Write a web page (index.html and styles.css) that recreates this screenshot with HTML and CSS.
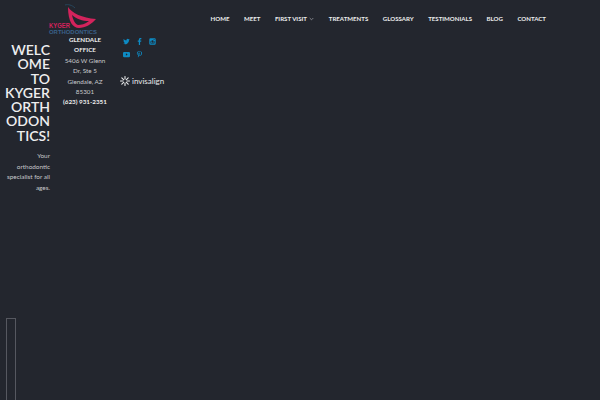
FILE: index.html
```html
<!doctype html>
<html>
<head>
<meta http-equiv="Content-Type" content="text/html; charset=utf-8"/>
<title>Kyger Orthodontics</title>
<link rel="stylesheet" href="styles.css">
</head>

<body>
<div class="header">
	<a href="#" class="logo">
		<svg width="50" height="32" viewBox="0 0 50 32">
			<path d="M17 1C20 0 24 1 27 4" fill="none" stroke="#27465c" stroke-width="1"/>
			<path d="M20 3C24 9 34 14 48 15C44 20 37 24 31 24C25 24 20 18 20 3Z" fill="#d3235c"/>
			<path d="M24 11C29 15 34 17 41 17C37 20 33 21 30 21C27 20 25 16 24 11Z" fill="#23262e"/>
			<text x="1" y="23.500" class="logo-name" textLength="21" lengthAdjust="spacingAndGlyphs">KYGER</text>
			<text x="1" y="30" class="logo-sub" textLength="48" lengthAdjust="spacingAndGlyphs">ORTHODONTICS</text>
		</svg>
	</a>
	<ul class="nav">
		<li><a href="#">Home</a></li>
		<li><a href="#">Meet</a></li>
		<li><a href="#">First Visit <svg class="chev" width="5" height="4" viewBox="0 0 5 4"><path d="M.7 1 2.500 2.800 4.300 1" fill="none" stroke="#a9abb0" stroke-width=".7"/></svg></a></li>
		<li><a href="#">Treatments</a></li>
		<li><a href="#">Glossary</a></li>
		<li><a href="#">Testimonials</a></li>
		<li><a href="#">Blog</a></li>
		<li><a href="#">Contact</a></li>
	</ul>
</div>

<div class="main">
	<div class="intro">
		<h1>WELC<br>OME<br>TO<br>KYGER<br>ORTH<br>ODON<br>TICS!</h1>
		<p>Your orthodontic specialist for all ages.</p>
	</div>
	<div class="office">
		<strong>GLENDALE OFFICE</strong>
		<p>5406 W Glenn Dr, Ste 5 Glendale, AZ 85301</p>
		<strong class="phone">(623) 931-2351</strong>
	</div>
	<div class="side">
		<div class="social">
			<a href="#"><svg width="7" height="7" viewBox="0 0 24 24"><path d="M23 5c-.8.400-1.700.600-2.600.700 1-.600 1.700-1.500 2-2.500-.9.500-1.900.9-2.900 1.100a4.600 4.600 0 0 0-7.900 4.200C7.800 8.300 4.400 6.500 2.200 3.700c-1.200 2.100-.6 4.800 1.400 6.100-.7 0-1.400-.2-2.100-.6 0 2.200 1.600 4.200 3.700 4.600-.7.200-1.400.2-2.100.1.600 1.900 2.300 3.200 4.300 3.200A9.300 9.300 0 0 1 .6 19a13 13 0 0 0 20-11.500c.9-.7 1.700-1.500 2.400-2.500Z"/></svg></a>
			<a href="#"><svg width="7" height="7" viewBox="0 0 24 24"><path d="M14 24V13h3.700l.6-4.300H14V6c0-1.200.4-2.100 2.100-2.100h2.300V.2C18 .1 16.700 0 15.200 0 11.900 0 9.700 2 9.700 5.600v3.100H6V13h3.700v11Z"/></svg></a>
			<a href="#"><svg width="7" height="7" viewBox="0 0 24 24"><path fill-rule="evenodd" d="M5 1h14a4 4 0 0 1 4 4v14a4 4 0 0 1-4 4H5a4 4 0 0 1-4-4V5a4 4 0 0 1 4-4Zm0 9v9h14v-9h-1.600a5.600 5.600 0 1 1-10.800 0Zm7-2a4 4 0 1 0 0 8 4 4 0 0 0 0-8Zm4-4v3h3V4Z"/></svg></a>
			<a href="#"><svg width="7" height="7" viewBox="0 0 24 24"><path fill-rule="evenodd" d="M4 3h16a4 4 0 0 1 4 4v10a4 4 0 0 1-4 4H4a4 4 0 0 1-4-4V7a4 4 0 0 1 4-4Zm6 5v8l6-4Z"/></svg></a>
			<a href="#"><svg width="7" height="7" viewBox="0 0 24 24"><path d="M12.500 0C6 0 3 4.300 3 8c0 2.200.9 4.200 2.700 5 .3.100.6 0 .7-.3l.3-1.100c.1-.3 0-.5-.2-.7-.5-.6-.9-1.500-.9-2.600 0-3.400 2.500-6.400 6.600-6.400 3.600 0 5.600 2.200 5.600 5.100 0 3.800-1.700 7-4.200 7-1.400 0-2.400-1.100-2.100-2.500.4-1.700 1.200-3.500 1.200-4.700 0-1.100-.6-2-1.800-2-1.400 0-2.600 1.500-2.600 3.500 0 1.300.4 2.100.4 2.100L6.800 17c-.5 2-.1 4.500 0 4.800 0 .2.200.2.300.1.100-.2 1.800-2.200 2.300-4.200l.9-3.500c.5.900 1.800 1.700 3.300 1.700 4.300 0 7.200-3.900 7.200-9.200C20.800 3.700 17.400 0 12.500 0Z"/></svg></a>
		</div>
		<div class="invisalign">
			<svg width="10" height="10" viewBox="0 0 20 20"><g stroke="#e9eaec" stroke-width="2.200" stroke-linecap="round"><path d="M10 1v5M10 14v5M1 10h5M14 10h5M3.600 3.600 7.200 7.200M12.800 12.800l3.600 3.600M3.600 16.400l3.600-3.600M12.800 7.200l3.600-3.600"/></g></svg>
			<span>invisalign</span>
		</div>
	</div>
</div>

<div class="scroll-box"></div>
</body>
</html>
```

FILE: styles.css
```css
*{ margin:0; padding:0; list-style:none; box-sizing:border-box;}
html,body{ height:100%;}
body{ background:#23262e; color:#c9cacd; font-family:"Lato","Open Sans",sans-serif; overflow:hidden; position:relative;}
a{ color:inherit; text-decoration:none;}

.header{ display:flex; justify-content:space-between; height:36px; padding:4px 54px 0 48px;}
.logo{ display:block; width:50px; height:32px;}
.logo-name{ font:700 7px "Liberation Sans",sans-serif; fill:#d3235c;}
.logo-sub{ font:700 5px "Liberation Sans",sans-serif; fill:#3a6088;}

.nav{ display:flex; gap:14.500px; padding-top:11px; font-size:6.100px; font-weight:700; line-height:8px; text-transform:uppercase; color:#eceded;}
.chev{ margin-left:1px;}

.main{ display:flex; gap:10px;}
.intro{ width:50px; text-align:right; padding-top:7px;}
.intro h1{ font-size:14px; line-height:14.300px; font-weight:600; color:#eeeeef;}
.intro p{ margin:8px 0 0 5px; font-size:6.400px; line-height:10.500px;}

.office{ width:50px; margin-top:-1px; text-align:center; font-size:6.300px; line-height:10.400px;}
.office p{ padding:0 4px;}
.office strong{ display:block; padding:0 8px; color:#eeeeef; font-weight:700;}
.office .phone{ padding:0; white-space:nowrap;}

.side{ padding-top:2px;}
.social{ display:grid; grid-template-columns:repeat(3,7px); gap:6px; margin-left:3px;}
.social a{ display:block; height:7px;}
.social svg{ display:block; fill:#0d8bc4;}
.invisalign{ display:flex; align-items:center; gap:2px; margin-top:18px; font-size:8px; line-height:10px; color:#e9eaec;}

.scroll-box{ position:absolute; left:6px; top:318px; width:10px; height:82px; border:1px solid #565860; border-bottom:0;}
```
